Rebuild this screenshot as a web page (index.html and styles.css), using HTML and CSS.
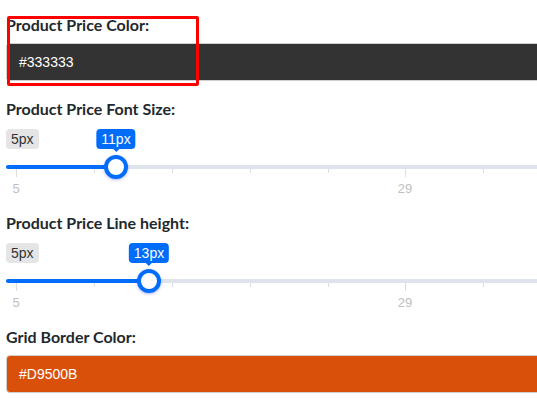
FILE: index.html
```html
<!DOCTYPE html>
<html>
<head>
<meta charset="utf-8">
<link rel="stylesheet" href="styles.css">
</head>
<body>
<div class="panel">
  <div class="field">
    <div class="label">Product Price Color:</div>
    <div class="color-input dark">#333333</div>
  </div>

  <div class="field">
    <div class="label">Product Price Font Size:</div>
    <div class="slider">
      <span class="irs-min">5px</span>
      <div class="line"></div>
      <div class="bar" style="width:110px"></div>
      <div class="grid">
        <span class="pol big" style="left:10px"></span>
        <span class="pol" style="left:88px"></span>
        <span class="pol" style="left:166px"></span>
        <span class="pol" style="left:244px"></span>
        <span class="pol" style="left:322px"></span>
        <span class="pol big" style="left:399px"></span>
        <span class="pol" style="left:477px"></span>
        <span class="gtext" style="left:10px">5</span>
        <span class="gtext" style="left:399px">29</span>
      </div>
      <span class="handle" style="left:110px"></span>
      <span class="single" style="left:110px">11px</span>
    </div>
  </div>

  <div class="field">
    <div class="label">Product Price Line height:</div>
    <div class="slider">
      <span class="irs-min">5px</span>
      <div class="line"></div>
      <div class="bar" style="width:143px"></div>
      <div class="grid">
        <span class="pol big" style="left:10px"></span>
        <span class="pol" style="left:88px"></span>
        <span class="pol" style="left:166px"></span>
        <span class="pol" style="left:244px"></span>
        <span class="pol" style="left:322px"></span>
        <span class="pol big" style="left:399px"></span>
        <span class="pol" style="left:477px"></span>
        <span class="gtext" style="left:10px">5</span>
        <span class="gtext" style="left:399px">29</span>
      </div>
      <span class="handle" style="left:143px"></span>
      <span class="single" style="left:143px">13px</span>
    </div>
  </div>

  <div class="field">
    <div class="label">Grid Border Color:</div>
    <div class="color-input orange">#D9500B</div>
  </div>

  <div class="highlight"></div>
</div>
</body>
</html>
```

FILE: styles.css
```css
html, body {
  margin: 0;
  padding: 0;
  overflow: hidden;
  background: #ffffff;
}

.panel {
  position: relative;
  width: 804px;
  padding: 15px 0 0 6px;
}

.field {
  margin-bottom: 18px;
}

.label {
  font-family: Lato, "Noto Sans", sans-serif;
  font-weight: 700;
  font-size: 16px;
  line-height: 20px;
  color: #23282d;
}

.color-input {
  margin-top: 8px;
  height: 38px;
  box-sizing: border-box;
  border: 1px solid #cfcfcf;
  border-radius: 4px;
  padding: 0 12px;
  display: flex;
  align-items: center;
  font-family: "Liberation Sans", Arial, sans-serif;
  font-size: 14px;
  color: #ffffff;
}

.dark { background: #333333; }
.orange { background: #d9500b; }

.slider {
  position: relative;
  margin-top: 10px;
  height: 66px;
  font-family: "Liberation Sans", Arial, sans-serif;
}

.irs-min {
  position: absolute;
  left: 0;
  top: 0;
  font-size: 14px;
  line-height: 14px;
  padding: 3px 5px;
  border-radius: 4px;
  background: rgba(0, 0, 0, 0.1);
  color: #333333;
}

.line {
  position: absolute;
  left: 0;
  right: 0;
  top: 36px;
  height: 4px;
  border-radius: 4px;
  background: #dee4ec;
}

.bar {
  position: absolute;
  left: 0;
  top: 36px;
  height: 4px;
  border-radius: 2px 0 0 2px;
  background: #006cfa;
}

.grid {
  position: absolute;
  left: 0;
  right: 0;
  top: 40px;
  height: 26px;
}

.pol {
  position: absolute;
  top: 0;
  width: 1px;
  height: 4px;
  background: #dedede;
}

.pol.big {
  height: 8px;
}

.gtext {
  position: absolute;
  top: 13px;
  transform: translateX(-50%);
  font-size: 13px;
  line-height: 13px;
  color: #c0c0c0;
}

.handle {
  position: absolute;
  top: 26px;
  width: 24px;
  height: 24px;
  margin-left: -12px;
  box-sizing: border-box;
  border: 4px solid #006cfa;
  border-radius: 50%;
  background: #ffffff;
  box-shadow: 0 1px 3px rgba(0, 0, 255, 0.3);
}

.single {
  position: absolute;
  top: 0;
  transform: translateX(-50%);
  font-size: 14px;
  line-height: 14px;
  padding: 3px 5px;
  border-radius: 4px;
  background: #006cfa;
  color: #ffffff;
  white-space: nowrap;
}

.single::before {
  content: "";
  position: absolute;
  left: 50%;
  bottom: -6px;
  margin-left: -3px;
  border: 3px solid transparent;
  border-top-color: #006cfa;
}

.highlight {
  position: absolute;
  left: 7px;
  top: 16px;
  width: 192px;
  height: 70px;
  box-sizing: border-box;
  border: 3px solid #ff0000;
  border-radius: 2px;
}
```
